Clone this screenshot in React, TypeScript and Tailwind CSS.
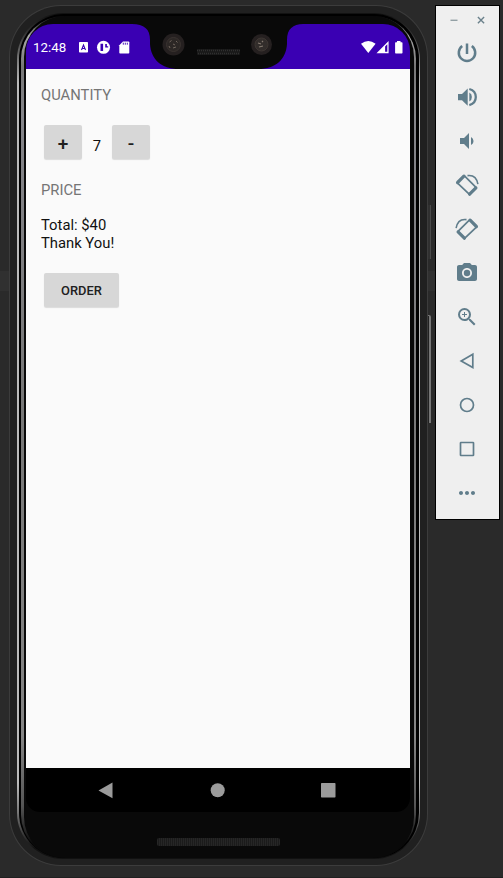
import type { ReactNode } from "react";
import { MdVolumeDown, MdCameraAlt, MdZoomIn, MdMoreHoriz } from "react-icons/md";

function StatusBar() {
  return (
    <div className="relative flex h-[45px] shrink-0 items-center bg-[#3a00b3] pt-[2px] text-white">
      <svg className="absolute left-0 top-0" width="384" height="45" viewBox="26 24 384 45">
        <path d="M132 24C144 24 150 29 150 40V44C151 59 161 69 179 69H258C276 69 286 59 287 44V40C287 29 293 24 303 24Z" fill="#090909" />
        <circle cx="173.500" cy="44.500" r="11" fill="#252020" />
        <circle cx="173.500" cy="44.500" r="7" fill="#2c2725" stroke="#3a3330" strokeWidth="1" />
        <path d="M169.500 42l2-1.500M176 41l1.500 1.500M169 46l1 2M173 48l3-1M173 44l2 1" stroke="#71665d" strokeWidth="1" />
        <circle cx="261.500" cy="44.500" r="10.500" fill="#252020" />
        <circle cx="261.500" cy="44.500" r="6.500" fill="#322d2b" stroke="#3e3733" strokeWidth="1" />
        <path d="M258 43l3 1M262 41l1 1M259 47l4-1" stroke="#857a70" strokeWidth="1.200" />
        <rect x="197" y="49" width="43" height="6" rx="1" fill="#181818" />
        <path d="M197 50.500H240M198 53.500H239" stroke="#303030" strokeWidth="1.500" strokeDasharray="1 1" />
      </svg>
      <span className="ml-[7.500px] w-[33.500px] text-[13.300px] leading-none">12:48</span>
      <svg className="ml-[10px]" width="56" height="16" viewBox="77 39.500 56 16" fill="#fff">
        <rect x="79" y="41.500" width="9" height="10.500" rx="0.800" />
        <path d="M81.500 49.500l2-5 2 5M82.200 48h2.600" stroke="#3a00b3" strokeWidth="1.100" fill="none" />
        <circle cx="103.500" cy="46.800" r="6.500" />
        <path d="M100.500 43.300v7.200h2.600v-7.200zM105.200 43.500v3.500h3v-1.300h-1.300v-2.200z" fill="#3a00b3" />
        <path d="M123 41h5.500q.8 0 .8.800v10.400q0 .8-.8.800h-8.400q-.8 0-.8-.8v-7.500z" />
        <path d="M123.300 42.200v2M125.300 42.200v2M127.300 42.200v2" stroke="#3a00b3" strokeWidth="0.900" />
      </svg>
      <svg className="ml-auto mr-[6px]" width="44" height="16" viewBox="360 39.500 44 16" fill="#fff">
        <path d="M361 43.300q7.300-5.500 14.600 0L368.300 52.500z" />
        <path d="M376.500 52.700L388.600 40.500V52.700zM385.100 46v5.300h2.200v-7.500z" fillRule="evenodd" />
        <path d="M397 40.500h3.500v1.200h1.300q.7 0 .7.700v9.900q0 .7-.7.700h-6q-.7 0-.7-.7v-9.900q0-.7.7-.7H397z" />
      </svg>
    </div>
  );
}

const greyButton = "flex h-[34px] items-center justify-center rounded-[2px] bg-[#d7d7d7] font-medium text-[#202020] shadow-[0_1px_1px_#00000020]";

function OrderScreen() {
  return (
    <main className="flex min-h-0 flex-1 flex-col bg-[#fafafa] pl-[15px] pt-[17px] text-[14.800px] leading-[18px] text-[#111]">
      <h2 className="pl-[0.500px] text-[#757575]">QUANTITY</h2>
      <div className="mt-[21px] flex items-center pl-[3px]">
        <button className={`${greyButton} w-[38px] pl-px pt-[3px] text-[19px]`}>+</button>
        <span className="w-[30px] pl-px pt-[7px] text-center">7</span>
        <button className={`${greyButton} w-[38px] pl-px pt-[3px] text-[19px]`}>-</button>
      </div>
      <h2 className="mt-[22px] pl-[0.500px] text-[#757575]">PRICE</h2>
      <p className="mt-[18px] pl-[0.500px] leading-[17.500px]">Total: $40<br />Thank You!</p>
      <button className={`${greyButton} ml-[3px] mt-[21px] w-[75px] pl-px pt-px text-[12.900px]`}>ORDER</button>
    </main>
  );
}

function NavigationBar() {
  return (
    <nav className="flex h-[44px] shrink-0 bg-black">
      <svg width="384" height="44" viewBox="26 768 384 44" fill="#9b9b9b">
        <path d="M98.500 790.500L112.500 782.500V798.200Z" />
        <circle cx="217.700" cy="790.300" r="7" />
        <rect x="321" y="783" width="14.500" height="14.500" rx="0.700" />
      </svg>
    </nav>
  );
}

function Phone() {
  return (
    <div className="ml-[9px] mt-[5px] h-[861px] w-[419px] shrink-0 rounded-[52px] bg-[#3c3c3c] p-px">
      <div className="h-full rounded-[51px] bg-[#202020] px-[7px] pb-[6px] pt-[7px]">
        <div className="h-full rounded-[46px] bg-[linear-gradient(#111_0px,#333_20px,#bbb_70px,#bbb_770px,#777_800px,#111_835px)] px-[1.500px] py-px">
          <div className="h-full rounded-[45px] bg-black px-[2.500px] pt-[2px]">
            <div className="h-full rounded-[43px] bg-[linear-gradient(#0b0b0b_0px,#aaa_20px,#777_50px,#85858a_100px,#777_400px,#858585_720px,#555_790px,#0a0a0a_828px)] px-[2.500px]">
              <div className="flex h-full flex-col rounded-[41px] bg-[#090909] pl-[2px] pr-[3px] pt-[8px]">
                <div className="flex h-[788px] w-[384px] shrink-0 flex-col overflow-hidden rounded-b-[14px] rounded-t-[27px]">
                  <StatusBar />
                  <OrderScreen />
                  <NavigationBar />
                </div>
                <div className="ml-[131px] mt-[26px] h-[8px] w-[123px] rounded-[2px] bg-[repeating-linear-gradient(90deg,#262626_0px,#262626_1px,#1b1b1b_1px,#1b1b1b_2px)]" />
              </div>
            </div>
          </div>
        </div>
      </div>
    </div>
  );
}

function DeviceIcon({ children }: { children: ReactNode }) {
  return (
    <svg width="26" height="26" viewBox="0 0 26 26" fill="none" stroke="currentColor" strokeWidth="1.700">
      {children}
    </svg>
  );
}

const rotateArt = (
  <>
    <path d="M10.200 3.600L22 15.400L15.700 22.600L3.300 10.800Z" strokeLinejoin="round" />
    <path d="M3.600 10.500L9.900 4.200M15.600 22.200L21.900 15.900" strokeWidth="3.200" strokeLinecap="round" />
    <path d="M13.500 3.600Q22.300 2.500 23.900 12.200" strokeWidth="1.600" />
  </>
);

function Toolbar() {
  const icons: ReactNode[] = [
    <DeviceIcon><path d="M13 3.500V14M8.200 6.100A8.200 8.200 0 1 0 17.800 6.100" strokeWidth="2.500" /></DeviceIcon>,
    <DeviceIcon>
      <path d="M4 10V16.200H8L13.700 21.800V4.400L8 10Z" fill="currentColor" stroke="none" />
      <path d="M15.300 8.600Q17.900 10 17.900 13.100T15.300 17.600Z" fill="currentColor" stroke="none" />
      <path d="M15.300 5Q21.800 6.800 21.800 13.100T15.300 21.200" strokeWidth="2.300" />
    </DeviceIcon>,
    <MdVolumeDown size={24} />,
    <DeviceIcon>{rotateArt}</DeviceIcon>,
    <DeviceIcon><g transform="translate(26 0) scale(-1 1)">{rotateArt}</g></DeviceIcon>,
    <MdCameraAlt size={24} />,
    <MdZoomIn size={24} />,
    <DeviceIcon><path d="M18.800 6.300V19.500L7.200 12.900Z" /></DeviceIcon>,
    <DeviceIcon><circle cx="13" cy="13" r="6.500" /></DeviceIcon>,
    <DeviceIcon><rect x="6.500" y="6.500" width="13" height="13" rx="0.500" /></DeviceIcon>,
    <MdMoreHoriz size={24} />,
  ];
  return (
    <aside className="ml-[7px] mt-[5px] flex h-[515px] w-[65px] shrink-0 flex-col border border-black bg-[#efefef] text-[#607d8b]">
      <div className="flex h-[25px] shrink-0 pt-[9px]">
        <svg width="63" height="10" viewBox="436 15 63 10" fill="none" stroke="#6c828c">
          <path d="M450.500 20.300H457.500" strokeWidth="1.400" stroke="#93a0a5" />
          <path d="M477.900 17L484.100 23.200M484.100 17L477.900 23.200" strokeWidth="1.400" />
        </svg>
      </div>
      {icons.map((icon, i) => (
        <div key={i} className="flex h-[44px] shrink-0 items-center justify-center pr-px">{icon}</div>
      ))}
    </aside>
  );
}

export default function App() {
  return (
    <div className="relative flex h-[878px] w-[503px] items-start overflow-hidden bg-[#2a2a2a] font-['Roboto',sans-serif]">
      <Phone />
      <Toolbar />
      <span className="absolute left-0 top-[271px] h-[20px] w-[9px] bg-[#303030]" />
      <span className="absolute left-[428px] top-[271px] h-[20px] w-[7px] bg-[#303030]" />
      <span className="absolute left-[428px] top-[205px] h-[54px] w-[3px] border-r border-[#4a4a4a] bg-[#303030]" />
      <span className="absolute left-[428px] top-[315px] h-[108px] w-[3px] rounded-tr-[2px] border-r-2 border-t border-[#777] bg-[#222]" />
      <span className="absolute bottom-0 left-0 h-px w-[503px] bg-[#202020]" />
    </div>
  );
}
